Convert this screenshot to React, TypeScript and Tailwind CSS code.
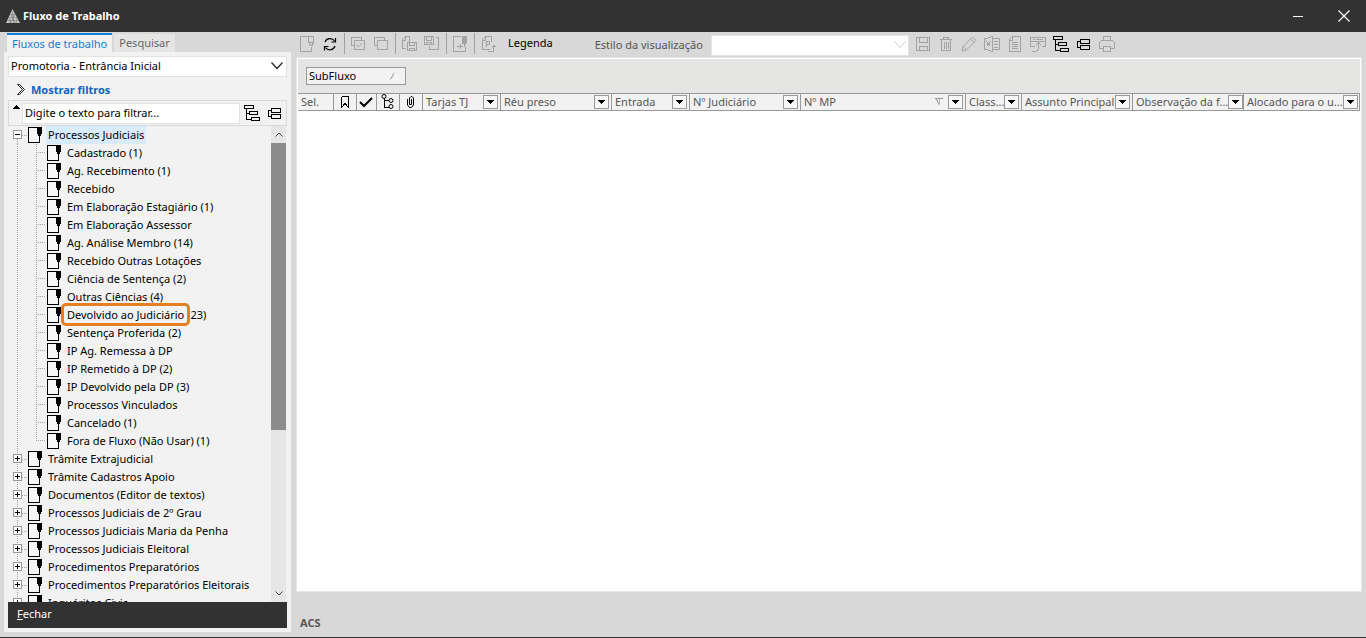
import { useState } from "react";
import type { ReactNode } from "react";

type Leaf = { label: string; count?: number; marked?: boolean };

const leaves: Leaf[] = [
  { label: "Cadastrado", count: 1 },
  { label: "Ag. Recebimento", count: 1 },
  { label: "Recebido" },
  { label: "Em Elaboração Estagiário", count: 1 },
  { label: "Em Elaboração Assessor" },
  { label: "Ag. Análise Membro", count: 14 },
  { label: "Recebido Outras Lotações" },
  { label: "Ciência de Sentença", count: 2 },
  { label: "Outras Ciências", count: 4 },
  { label: "Devolvido ao Judiciário", count: 23, marked: true },
  { label: "Sentença Proferida", count: 2 },
  { label: "IP Ag. Remessa à DP" },
  { label: "IP Remetido à DP", count: 2 },
  { label: "IP Devolvido pela DP", count: 3 },
  { label: "Processos Vinculados" },
  { label: "Cancelado", count: 1 },
  { label: "Fora de Fluxo (Não Usar)", count: 1 },
];

const branches = [
  "Trâmite Extrajudicial",
  "Trâmite Cadastros Apoio",
  "Documentos (Editor de textos)",
  "Processos Judiciais de 2º Grau",
  "Processos Judiciais Maria da Penha",
  "Processos Judiciais Eleitoral",
  "Procedimentos Preparatórios",
  "Procedimentos Preparatórios Eleitorais",
  "Inquéritos Civis",
];

function Icon({ children, size = 16 }: { children: ReactNode; size?: number }) {
  return (
    <svg
      width={size}
      height={size}
      viewBox="0 0 16 16"
      fill="none"
      stroke="currentColor"
      shapeRendering="crispEdges"
      className="block shrink-0"
      aria-hidden="true"
    >
      {children}
    </svg>
  );
}

const HierarchyIcon = () => (
  <Icon>
    <path d="M.5.5h9v3h-9zM5.500 6.500h8v3h-8zM7.500 12.500h8v3h-8zM2.500 4v10.500H7M3 8.500h2" />
  </Icon>
);

const CollapseIcon = () => (
  <Icon>
    <path d="M4.500 3.500h9v4h-9zM4.500 9.500h9v4h-9zM4 5.500H1.500v6H4" />
  </Icon>
);

function DocIcon() {
  return (
    <svg width="14" height="16" viewBox="0 0 14 16" shapeRendering="crispEdges" className="block shrink-0" aria-hidden="true">
      <rect x=".5" y=".5" width="11" height="15" fill="#f6f6f6" stroke="#000" />
      <path d="M9 0h5v7h-1v2h-1v2h-1V9h-1V7H9z" fill="#000" />
    </svg>
  );
}

function BranchGuide({ open, first }: { open: boolean; first?: boolean }) {
  return (
    <svg width="20" height="18" viewBox="0 0 20 18" shapeRendering="crispEdges" className="block" aria-hidden="true">
      <path d={first ? "M9.5 9v9M14 9.5h6" : "M9.5 0v18M14 9.5h6"} stroke="#a0a0a0" strokeDasharray="1 1" />
      <rect x="5.5" y="4.5" width="8" height="8" fill="#fff" stroke="#999" />
      <path d={open ? "M7 8.5h5" : "M7 8.5h5M9.5 6v5"} stroke="#000" />
    </svg>
  );
}

function LeafGuide({ last }: { last: boolean }) {
  return (
    <svg width="39" height="18" viewBox="0 0 39 18" shapeRendering="crispEdges" className="block shrink-0" aria-hidden="true">
      <path d="M9.5 0v18" stroke="#a0a0a0" strokeDasharray="1 1" />
      <path d={last ? "M28.5 0v9M28 8.5h10" : "M28.5 0v18M28 8.5h10"} stroke="#a0a0a0" strokeDasharray="1 1" />
    </svg>
  );
}

function Branch({ label, open = false, first = false, onToggle }: { label: string; open?: boolean; first?: boolean; onToggle?: () => void }) {
  return (
    <div className="flex h-[18px] items-center">
      <button type="button" aria-label={open ? "Recolher" : "Expandir"} aria-expanded={open} onClick={onToggle}>
        <BranchGuide open={open} first={first} />
      </button>
      <DocIcon />
      <button
        type="button"
        className={first ? "ml-1 h-[18px] bg-[#d9ebff] pr-[2px] pl-[2px] whitespace-nowrap" : "ml-1 h-[18px] pl-[2px] whitespace-nowrap"}
      >
        {label}
      </button>
    </div>
  );
}

const Toolbtn = ({ label, dark = false, children }: { label: string; dark?: boolean; children: ReactNode }) => (
  <button type="button" aria-label={label} className={dark ? "text-black" : "text-[#a3a3a3]"}>
    {children}
  </button>
);

const Divider = () => <span className="-mr-[2px] -ml-px h-[21px] w-px shrink-0 bg-[#a0a0a0]" />;

const columns: { label: string; width: string; filter: boolean; icon?: ReactNode; sort?: boolean }[] = [
  { label: "Sel.", width: "w-[36px]", filter: false },
  {
    label: "Marcador", width: "w-[23px]", filter: false,
    icon: <Icon><path d="M4.500 2.500h7v11M4.500 2.500v11M4.500 13.500l3.500-4 3.500 4" /></Icon>,
  },
  {
    label: "Concluído", width: "w-[20px]", filter: false,
    icon: <Icon><path d="M2 8l4 4 8-8" strokeWidth="2" shapeRendering="auto" /></Icon>,
  },
  {
    label: "Fluxo", width: "w-[23px]", filter: false,
    icon: (
      <Icon>
        <path d="M4.500 4v9.500H9M5 6.500h4" />
        <g shapeRendering="auto"><circle cx="4" cy="2.500" r="2" /><circle cx="11" cy="6.500" r="2" /><circle cx="11" cy="12.500" r="2" /></g>
      </Icon>
    ),
  },
  {
    label: "Anexo", width: "w-[23px]", filter: false,
    icon: <Icon><path d="M4.500 5v6l2 2.500h2l2-2.500V4l-1.500-1.500H8L6.500 4v6.500h2V5" shapeRendering="auto" /></Icon>,
  },
  { label: "Tarjas TJ", width: "w-[78px]", filter: true },
  { label: "Réu preso", width: "w-[111px]", filter: true },
  { label: "Entrada", width: "w-[78px]", filter: true },
  { label: "Nº Judiciário", width: "w-[111px]", filter: true },
  { label: "Nº MP", width: "w-auto", filter: true, sort: true },
  { label: "Classe", width: "w-[56px]", filter: true },
  { label: "Assunto Principal", width: "w-[111px]", filter: true },
  { label: "Observação da fila", width: "w-[111px]", filter: true },
  { label: "Alocado para o usuário", width: "w-[116px]", filter: true },
];

const shortLabels: Record<string, string> = {
  Classe: "Class...",
  "Observação da fila": "Observação da f...",
  "Alocado para o usuário": "Alocado para o u...",
};

export default function App() {
  const [open, setOpen] = useState(true);
  const [query, setQuery] = useState("");
  const shown = leaves.filter((l) => l.label.toLowerCase().includes(query.toLowerCase()));

  return (
    <div className="flex h-screen flex-col overflow-hidden border-b border-[#323232] bg-[#d8d8d8] font-['Noto_Sans',sans-serif] text-[11px] leading-[18px] text-black">
      <header className="flex h-8 shrink-0 items-center bg-[#323232] pr-4 pl-[6px] text-white">
        <svg width="14" height="15" viewBox="0 0 14 15" className="block" aria-hidden="true">
          <path d="M6.500 0L14 14H0z" fill="#c4c4c4" />
          <path d="M4.500 5.500h5M3 8.500h8M1.500 11.500h11M6.500 2l1 12M5 5l4 9M9 5l-5 9M3 9l2 5M11 9l-1 5" stroke="#6a6a6a" strokeWidth=".5" />
        </svg>
        <h1 className="ml-[3px] font-bold">Fluxo de Trabalho</h1>
        <div className="ml-auto flex items-center gap-[34px]">
          <button type="button" aria-label="Minimizar">
            <svg width="12" height="12" viewBox="0 0 12 12" className="block"><path d="M1 6.500h10" stroke="#fff" /></svg>
          </button>
          <button type="button" aria-label="Fechar janela">
            <svg width="12" height="12" viewBox="0 0 12 12" className="block"><path d="M.5.5l11 11M11.500.5l-11 11" stroke="#fff" strokeWidth="1.200" /></svg>
          </button>
        </div>
      </header>

      <div className="flex min-h-0 flex-1 gap-[5px] px-1">
        <aside className="flex w-[287px] shrink-0 flex-col pb-[5px]">
          <div role="tablist" className="flex h-5 shrink-0 items-end gap-[2px] pl-[3px]">
            <button type="button" role="tab" aria-selected="true" className="h-[19px] border-t-2 border-[#0f80d8] bg-[#f2f2f2] px-[5px] leading-[14px] text-[#0f80d8]">
              Fluxos de trabalho
            </button>
            <button type="button" role="tab" aria-selected="false" className="h-[18px] bg-[#e5e5e3] px-[5px] text-[#666]">
              Pesquisar
            </button>
          </div>

          <div className="flex min-h-0 flex-1 flex-col bg-[#f2f2f2] p-1">
            <div className="relative shrink-0">
              <select aria-label="Lotação" className="block h-[21px] w-full appearance-none border border-[#e2e2e2] bg-white pr-5 pb-[2px] pl-[2px] leading-[18px]">
                <option>Promotoria - Entrância Inicial</option>
              </select>
              <svg width="12" height="8" viewBox="0 0 12 8" className="pointer-events-none absolute top-[6px] right-1" aria-hidden="true">
                <path d="M.5.500L6 6.500l5.500-6" fill="none" stroke="#222" strokeWidth="1.200" />
              </svg>
            </div>

            <button type="button" className="mt-[3px] mb-px flex h-[19px] shrink-0 items-center gap-[5px] pl-[9px] font-bold text-[#0a64c4]">
              <svg width="9" height="11" viewBox="0 0 9 11" fill="none" stroke="#222" className="block" aria-hidden="true">
                <path d="M.5.5h2l5 5-5 5h-2l5-5z" />
              </svg>
              Mostrar filtros
            </button>

            <div className="flex h-[26px] shrink-0 items-center border border-[#d9d9d9] pl-[3px]">
              <svg width="8" height="4" viewBox="0 0 8 4" shapeRendering="crispEdges" className="mt-1 block self-start" aria-hidden="true">
                <path d="M4 0l4 4H0z" fill="#000" />
              </svg>
              <input
                aria-label="Filtrar fluxos"
                placeholder="Digite o texto para filtrar..."
                value={query}
                onChange={(e) => setQuery(e.target.value)}
                className="ml-[2px] h-[21px] min-w-0 flex-1 border border-[#e2e2e2] bg-white px-[2px] pb-[2px] outline-none placeholder:text-black"
              />
              <button type="button" aria-label="Expandir tudo" className="ml-1"><HierarchyIcon /></button>
              <button type="button" aria-label="Recolher tudo" className="mr-[3px] ml-[7px]"><CollapseIcon /></button>
            </div>

            <div className="flex min-h-0 flex-1">
              <ul className="min-w-0 flex-1 overflow-hidden">
                <li>
                  <Branch label="Processos Judiciais" open={open} first onToggle={() => setOpen(!open)} />
                  {open && (
                    <ul>
                      {shown.map((leaf, i) => (
                        <li key={leaf.label} className="flex h-[18px] items-center">
                          <LeafGuide last={i === shown.length - 1} />
                          <DocIcon />
                          <button type="button" className="ml-[6px] whitespace-nowrap">
                            <span className="relative">
                              {leaf.label}
                              {leaf.marked && <span className="absolute -inset-x-[6px] -inset-y-1 rounded-[5px] border-3 border-[#e67e22]" />}
                            </span>
                            {leaf.count !== undefined && ` (${leaf.count})`}
                          </button>
                        </li>
                      ))}
                    </ul>
                  )}
                </li>
                {branches.map((b) => (
                  <li key={b}><Branch label={b} /></li>
                ))}
              </ul>
              <div className="mr-px flex w-[15px] shrink-0 flex-col bg-[#e6e6e6]">
                <button type="button" aria-label="Rolar para cima" className="flex h-[17px] items-center justify-center">
                  <svg width="8" height="5" viewBox="0 0 8 5"><path d="M.5 4.500L4 1l3.500 3.500" fill="none" stroke="#444" /></svg>
                </button>
                <div className="min-h-0 flex-1"><div className="h-[65%] bg-[#8b8b8b]" /></div>
                <button type="button" aria-label="Rolar para baixo" className="flex h-[17px] items-center justify-center">
                  <svg width="8" height="5" viewBox="0 0 8 5"><path d="M.5.500L4 4 7.500.5" fill="none" stroke="#444" /></svg>
                </button>
              </div>
            </div>

            <button type="button" className="h-[26px] shrink-0 bg-[#323232] pb-[2px] pl-[9px] text-left text-white">
              <span className="underline">F</span>echar
            </button>
          </div>
        </aside>

        <main className="flex min-w-0 flex-1 flex-col">
          <div className="flex h-[25px] shrink-0 items-center gap-[7px] pb-[2px] pl-[3px]">
            <Toolbtn label="Novo"><Icon><path d="M9 .5H1.500v15h11V11M9.500 0v6.500l3 4M14.500 0v6.500l-2 4M9.500.5h5M9.500 6.500h5" /></Icon></Toolbtn>
            <Toolbtn label="Atualizar" dark>
              <Icon>
                <g shapeRendering="auto" strokeWidth="1.200"><path d="M3 6C4.500 2 10 1.500 12.500 5M13 10c-1.500 4.500-7 5-9.500 1.500" /><path d="M13.500 2v4h-4M2.500 14.500v-4h4" /></g>
              </Icon>
            </Toolbtn>
            <Divider />
            <Toolbtn label="Selecionar"><Icon><path d="M4 9.500H1.500v-8h10V4M4.500 4.500h10v9h-10z" /><path d="M6.500 8.500l2 2.500 4-4" shapeRendering="auto" /></Icon></Toolbtn>
            <Toolbtn label="Copiar"><Icon><path d="M4 9.500H1.500v-8h10V4M4.500 4.500h10v9h-10z" /></Icon></Toolbtn>
            <Divider />
            <Toolbtn label="Salvar documento"><Icon><path d="M5 12.500H1.500v-9l3-3h4V6M4.500 1v3H2M6.500 6.500h9v8h-9zM8.500 6.500v3h5v-3M8.500 14.500v-2h5v2" /></Icon></Toolbtn>
            <Toolbtn label="Carregar documento"><Icon><path d="M.5.5h9v8h-9zM2.500 1v3h5V1M2.500 8V6h5v2M12 1.500h2.500v12h-9V10" /></Icon></Toolbtn>
            <Divider />
            <Toolbtn label="Inserir"><Icon><path d="M9 .5H1.500v15h12V11M5 10.500h6M8.500 8v5" /><path d="M10 0h5v7h-1v2h-1v2h-1V8h-2z" fill="currentColor" stroke="none" /></Icon></Toolbtn>
            <Divider />
            <Toolbtn label="Publicar"><Icon><path d="M10 13.500H2.500v-10l3-3h6V6M5.500 1v3H3M6.500 11V5.500h3v3h-3M8 15.500h5.500V9M11.500 10.500h4M12.500 9.500h2" /></Icon></Toolbtn>
            <button type="button" className="ml-[5px] pb-px">Legenda</button>
            <label htmlFor="estilo" className="ml-[35px] pt-[3px] whitespace-nowrap text-[#555]">Estilo da visualização</label>
            <div className="relative ml-px w-[198px] pt-1">
              <select id="estilo" className="block h-[21px] w-full appearance-none border border-[#e4e4e4] bg-white" />
              <svg width="12" height="8" viewBox="0 0 12 8" className="pointer-events-none absolute top-[10px] right-[3px]" aria-hidden="true">
                <path d="M.5.500L6 6.500l5.500-6" fill="none" stroke="#ccc" />
              </svg>
            </div>
            <div className="-ml-px flex items-center gap-[7px]">
              <Toolbtn label="Salvar"><Icon><path d="M1.500 1.500h13v13h-13zM4.500 2v4h8V2M4.500 14v-4h8v4" /></Icon></Toolbtn>
              <Toolbtn label="Excluir"><Icon><path d="M2 3.500h12M5.500 3V1.500h5V3M3.500 4v10.500h9V4M6 6v7M8 6v7M10 6v7" /></Icon></Toolbtn>
              <Toolbtn label="Editar"><Icon><path d="M1 15l1-4.500 9.500-9.500 3.500 3.500L5.500 14zM9.500 3l3.500 3.500M2 10.500L5.500 14" shapeRendering="auto" /></Icon></Toolbtn>
              <Toolbtn label="Excel"><Icon><path d="M.5 3l8-2.500v15L.5 13zM9 2.500h6.500v11H9M10 5.500h4M10 8.500h4M10 11.500h4M2.500 5.500l4 5M6.500 5.500l-4 5" /></Icon></Toolbtn>
              <Toolbtn label="Relatório"><Icon><path d="M2.500 3.500l3-3h8v15h-11zM5.500 1v3H3M5 6.500h6M5 8.500h6M5 10.500h6M5 12.500h6" /></Icon></Toolbtn>
              <Toolbtn label="Exportar"><Icon><path d="M5 10.500H.5V1.500h15v9H12M1 5.500h14M3 3.500h2M6 3.500h7M2 15.500h3.500l3-2V7M5.500 9.500l3-3 3 3" /></Icon></Toolbtn>
              <Toolbtn label="Expandir grupos" dark><HierarchyIcon /></Toolbtn>
              <Toolbtn label="Recolher grupos" dark><CollapseIcon /></Toolbtn>
              <Toolbtn label="Imprimir"><Icon><path d="M4.500 4V.5h7V4M4 12.500H.5v-6l2-2h11l2 2v6H12M4.500 10.500h7v5h-7z" /></Icon></Toolbtn>
            </div>
          </div>

          <section className="flex min-h-0 flex-1 flex-col border border-[#e6e6e6] bg-white p-px">
            <div className="flex h-[34px] shrink-0 items-center bg-[#e5e5e3] pl-2">
              <button type="button" className="flex h-[18px] w-[100px] items-center justify-between border border-[#999] bg-[#f2f2f2] pr-[6px] pl-[2px] leading-4">
                SubFluxo
                <svg width="9" height="8" viewBox="0 0 9 8" aria-hidden="true" fill="none">
                  <path d="M.5 7.500L4.500.5" stroke="#999" /><path d="M4.500.5l3.500 7H1" stroke="#fff" />
                </svg>
              </button>
            </div>
            <table className="w-full shrink-0 table-fixed border-collapse bg-[#f2f2f2] text-[#555]">
              <thead>
                <tr>
                  {columns.map((c) => (
                    <th key={c.label} scope="col" className={`${c.width} p-0 text-left font-normal`}>
                      <div className="flex h-[18px] items-center border-y border-r border-[#999] pr-[2px] pl-[2px] leading-4">
                        {c.icon ? (
                          <span className="-ml-px flex flex-1 justify-center text-black" title={c.label}>{c.icon}</span>
                        ) : (
                          <span className="flex-1 pl-px whitespace-nowrap">{shortLabels[c.label] ?? c.label}</span>
                        )}
                        {c.sort && (
                          <svg width="9" height="8" viewBox="0 0 9 8" fill="none" className="mr-1" aria-hidden="true">
                            <path d="M0 .5h8M1 1l3.500 6" stroke="#999" /><path d="M4.500 7V1" stroke="#bbb" />
                          </svg>
                        )}
                        {c.filter && (
                          <button type="button" aria-label={`Filtrar ${c.label}`} className="flex h-[14px] w-[15px] shrink-0 items-center justify-center border border-[#999] bg-[#f8f8f8]">
                            <svg width="7" height="4" viewBox="0 0 7 4" shapeRendering="crispEdges"><path d="M0 0h7v1H6v1H5v1H4v1H3V3H2V2H1V1H0z" fill="#000" /></svg>
                          </button>
                        )}
                      </div>
                    </th>
                  ))}
                </tr>
              </thead>
            </table>
          </section>

          <footer className="flex h-[45px] shrink-0 items-center pt-[17px] pl-1 font-bold text-[#555]">ACS</footer>
        </main>
      </div>
    </div>
  );
}
